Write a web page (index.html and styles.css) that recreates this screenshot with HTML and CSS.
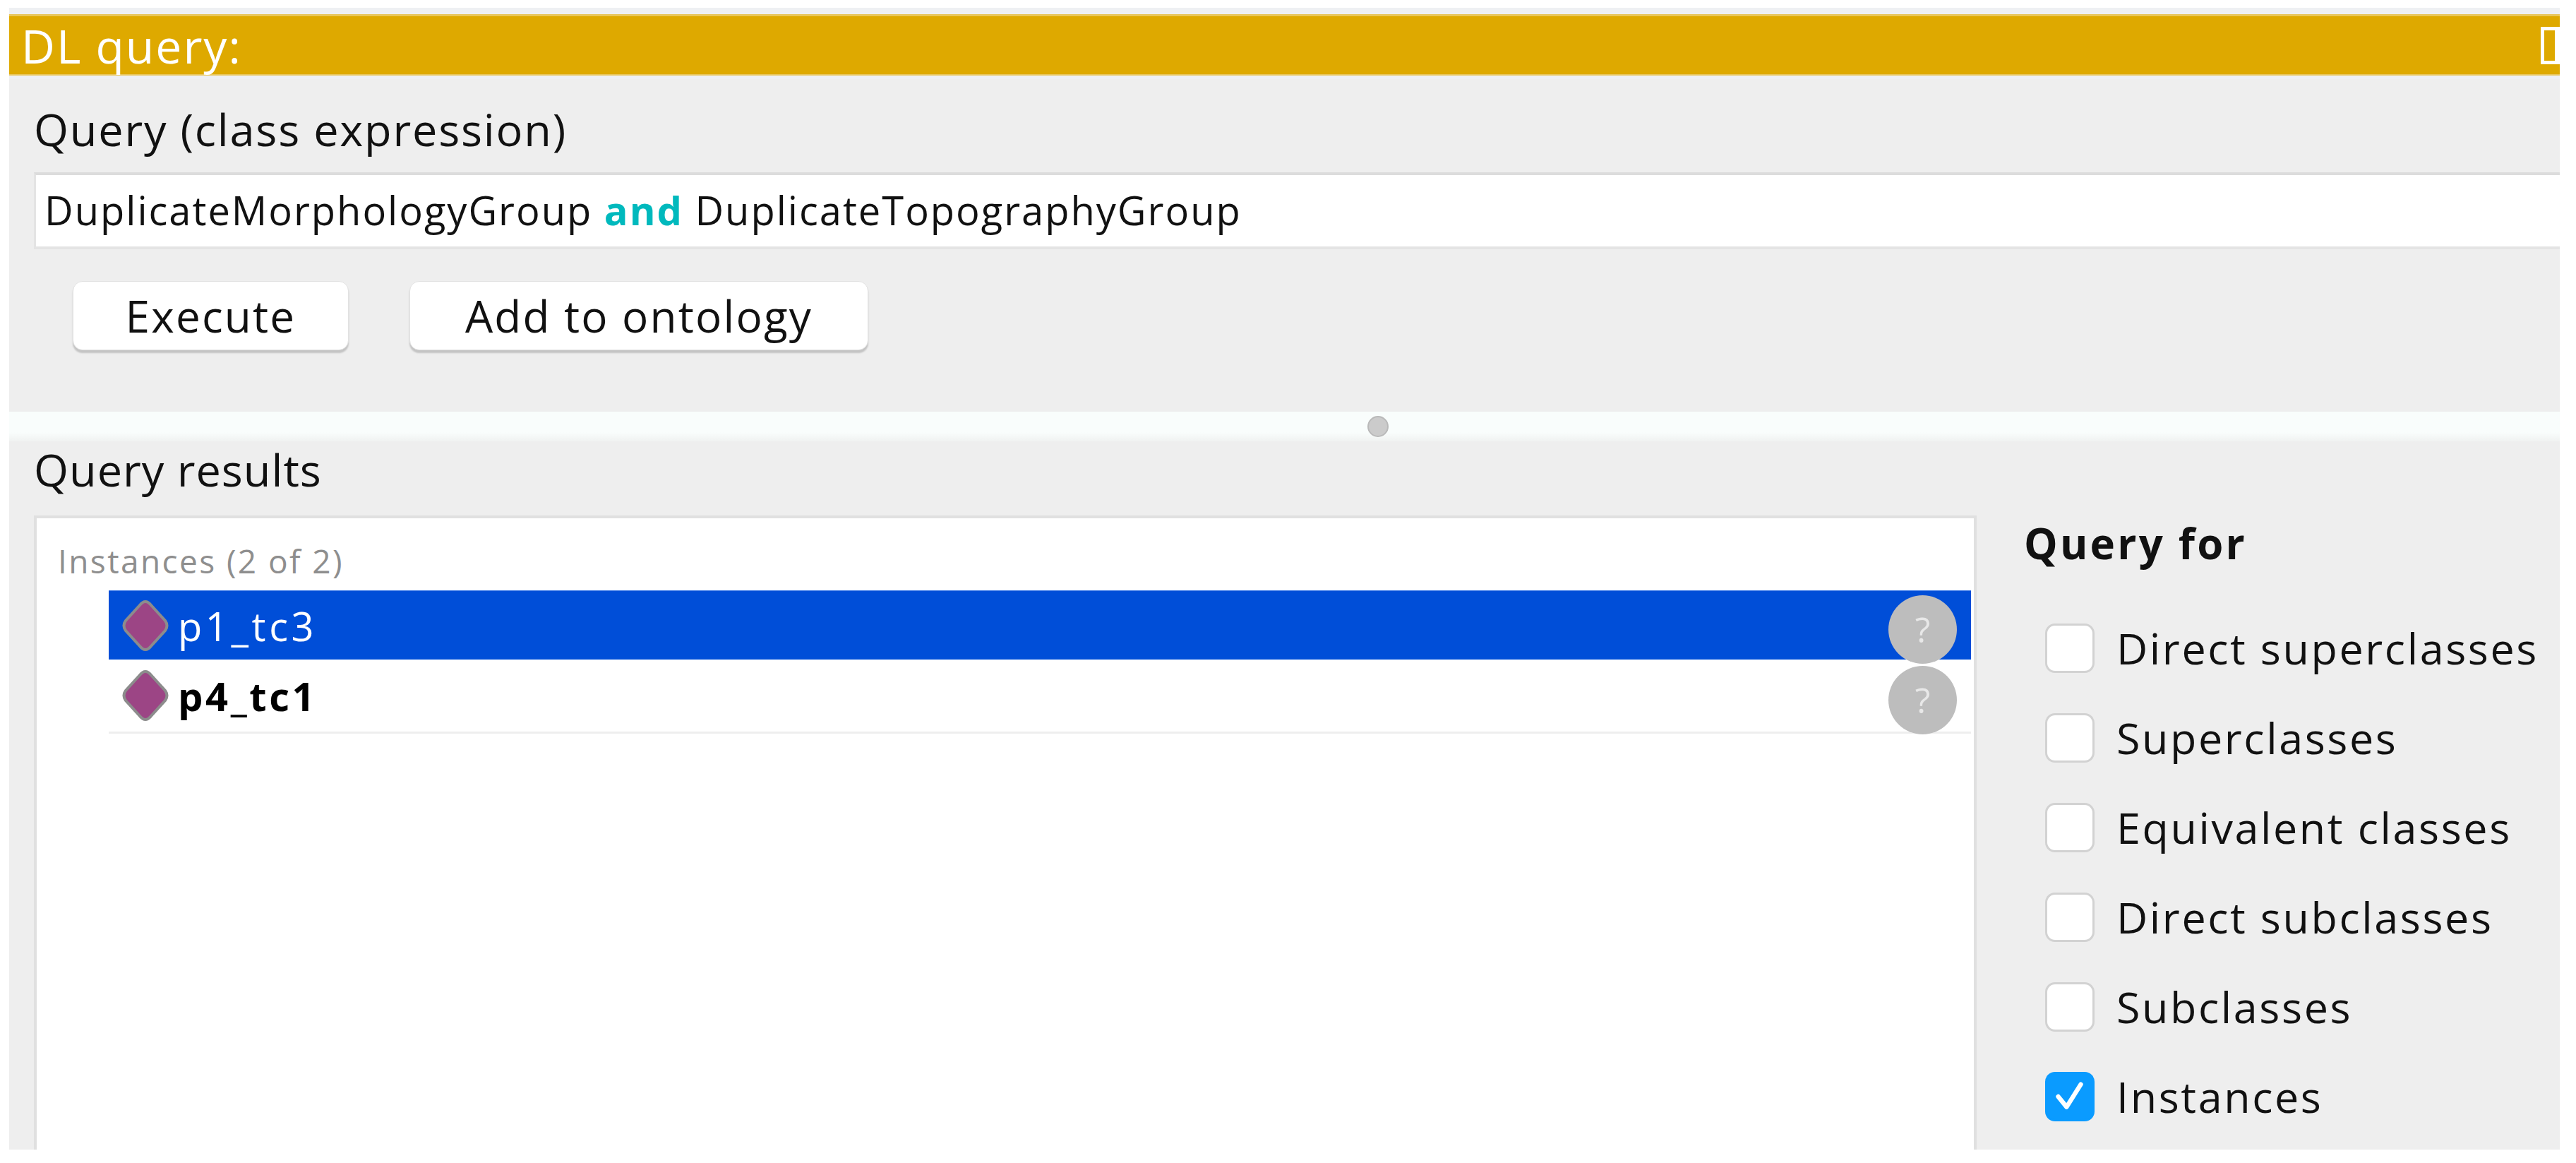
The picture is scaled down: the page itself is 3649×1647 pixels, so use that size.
FILE: index.html
```html
<!DOCTYPE html>
<html lang="en">
<head>
<meta charset="utf-8">
<title>DL query</title>
<link rel="stylesheet" href="styles.css">
</head>
<body>
<main class="panel">
  <header class="title-bar">
    <span class="title">DL query:</span>
    <span class="view-icon"></span>
  </header>
  <section class="query">
    <div class="label label-query">Query (class expression)</div>
    <div class="field">DuplicateMorphologyGroup <b class="kw">and</b> DuplicateTopographyGroup</div>
    <div class="buttons">
      <button class="btn btn-exec">Execute</button>
      <button class="btn btn-add">Add to ontology</button>
    </div>
  </section>
  <div class="splitter"><span class="handle"></span></div>
  <section class="results">
    <div class="label label-results">Query results</div>
    <div class="results-body">
      <div class="list">
        <div class="list-head">Instances (2 of 2)</div>
        <div class="row row-selected">
          <svg class="diamond" viewBox="0 0 70 74"><path d="M35 3 Q39 3 43 8 L63 30 Q68 37 63 44 L43 66 Q39 71 35 71 Q31 71 27 66 L7 44 Q2 37 7 30 L27 8 Q31 3 35 3 Z"/></svg>
          <span class="name">p1_tc3</span>
          <span class="help">?</span>
        </div>
        <div class="row row-plain">
          <svg class="diamond" viewBox="0 0 70 74"><path d="M35 3 Q39 3 43 8 L63 30 Q68 37 63 44 L43 66 Q39 71 35 71 Q31 71 27 66 L7 44 Q2 37 7 30 L27 8 Q31 3 35 3 Z"/></svg>
          <span class="name name-bold">p4_tc1</span>
          <span class="help">?</span>
        </div>
      </div>
      <aside class="side">
        <div class="side-title">Query for</div>
        <label class="check"><span class="box"></span>Direct superclasses</label>
        <label class="check"><span class="box"></span>Superclasses</label>
        <label class="check"><span class="box"></span>Equivalent classes</label>
        <label class="check"><span class="box"></span>Direct subclasses</label>
        <label class="check"><span class="box"></span>Subclasses</label>
        <label class="check"><span class="box box-on"><svg viewBox="0 0 70 70"><path d="M17 35 L30 51 L52 16"/></svg></span>Instances</label>
      </aside>
    </div>
  </section>
</main>
</body>
</html>
```

FILE: styles.css
```css
html, body {
  margin: 0;
  background: #fff;
}
body {
  width: 3649px;
  height: 1647px;
  overflow: hidden;
  font-family: "Open Sans", "Noto Sans", sans-serif;
  color: #111;
}
.panel {
  margin: 11px 0 0 13px;
  width: 3613px;
  height: 1617px;
  display: flex;
  flex-direction: column;
  background: #eef0f3;
  overflow: hidden;
}
.title-bar {
  margin-top: 9px;
  height: 87px;
  flex: none;
  box-sizing: border-box;
  background: #dea900;
  border-top: 3px solid #e8c65c;
  border-bottom: 2px solid #e8c65c;
  display: flex;
  align-items: center;
  justify-content: space-between;
  padding-left: 17px;
  color: #fff;
}
.title {
  font-size: 66px;
  line-height: 80px;
  letter-spacing: 2px;
}
.view-icon {
  width: 27px;
  height: 53px;
  box-sizing: border-box;
  border: 5px solid #fff;
  border-right-width: 7px;
}
.query {
  height: 476px;
  flex: none;
  box-sizing: border-box;
  padding: 0 0 0 35px;
  background: #eee;
  border-top: 5px solid #eef0f4;
}
.label {
  font-size: 63px;
  line-height: 74px;
  letter-spacing: 1.2px;
}
.label-query {
  margin-top: 34px;
  letter-spacing: 1.8px;
}
.field {
  margin-top: 24px;
  height: 109px;
  box-sizing: border-box;
  background: #fff;
  border-top: 4px solid #dcdcdc;
  border-bottom: 4px solid #e4e4e4;
  border-left: 3px solid #e4e4e4;
  padding-left: 12px;
  font-size: 56px;
  line-height: 98px;
  letter-spacing: 2px;
}
.kw {
  color: #00b9bd;
  font-weight: 700;
}
.buttons {
  display: flex;
  gap: 86px;
  margin-top: 45px;
  padding-left: 55px;
}
.btn {
  height: 98px;
  box-sizing: border-box;
  padding: 0;
  background: #fff;
  border: 1px solid #e2e2e2;
  border-radius: 14px;
  box-shadow: 0 4px 2px #c4c4c4;
  font: inherit;
  font-size: 62px;
  letter-spacing: 2.2px;
  color: #111;
}
.btn-exec { width: 391px; }
.btn-add { width: 650px; }
.splitter {
  height: 42px;
  flex: none;
  background: linear-gradient(#f9fdfc 70%, #f0f2f1);
  display: flex;
  align-items: center;
  justify-content: center;
}
.handle {
  width: 30px;
  height: 30px;
  box-sizing: border-box;
  border-radius: 50%;
  background: #cbcbcb;
  border: 2px solid #b9b9b9;
  margin-left: 264px;
}
.results {
  flex: 1;
  min-height: 0;
  display: flex;
  flex-direction: column;
  padding-left: 35px;
  background: #eee;
}
.label-results {
  height: 105px;
  line-height: 80px;
  flex: none;
  letter-spacing: 1px;
}
.results-body {
  flex: 1;
  min-height: 0;
  display: flex;
}
.list {
  width: 2752px;
  flex: none;
  box-sizing: border-box;
  background: #fff;
  border: 4px solid #e0e0e0;
  border-bottom: 0;
  padding: 0 4px 0 102px;
}
.list-head {
  margin-left: -72px;
  height: 102px;
  line-height: 120px;
  font-size: 46px;
  letter-spacing: 2.4px;
  color: #8e8e8e;
}
.row {
  display: flex;
  align-items: center;
  box-sizing: border-box;
  height: 98px;
  padding-left: 17px;
}
.row-selected {
  background: #004ed8;
  border-top: 1px solid #3a78e6;
  color: #fff;
}
.row-plain {
  height: 105px;
  border-bottom: 3px solid #eeeeee;
  color: #000;
}
.diamond {
  width: 70px;
  height: 74px;
  flex: none;
  fill: #9c4585;
  stroke: #8c8c8c;
  stroke-width: 4;
}
.name {
  margin-left: 11px;
  font-size: 56px;
  font-weight: 500;
  letter-spacing: 4.6px;
}
.name-bold {
  font-weight: 700;
  letter-spacing: 3.6px;
}
.help {
  margin-left: auto;
  margin-right: 20px;
  margin-top: 12px;
  width: 97px;
  height: 97px;
  flex: none;
  border-radius: 50%;
  background: #bdbdbd;
  color: #e8e8e8;
  font-size: 50px;
  line-height: 97px;
  text-align: center;
}
.side {
  flex: 1;
  padding-left: 67px;
}
.side-title {
  font-size: 60px;
  font-weight: 700;
  line-height: 74px;
  letter-spacing: 3.2px;
  margin-top: 2px;
  margin-bottom: 48px;
}
.check {
  display: flex;
  align-items: center;
  height: 127px;
  margin-left: 30px;
  font-size: 61px;
  letter-spacing: 2.6px;
}
.box {
  width: 70px;
  height: 70px;
  box-sizing: border-box;
  flex: none;
  margin-right: 31px;
  background: #fff;
  border: 3px solid #d2d2d2;
  border-radius: 14px;
}
.box-on {
  background: #0a9bff;
  border-color: #0a9bff;
}
.box-on svg {
  display: block;
  width: 64px;
  height: 64px;
  fill: none;
  stroke: #fff;
  stroke-width: 7;
  stroke-linecap: round;
  stroke-linejoin: round;
}
```
